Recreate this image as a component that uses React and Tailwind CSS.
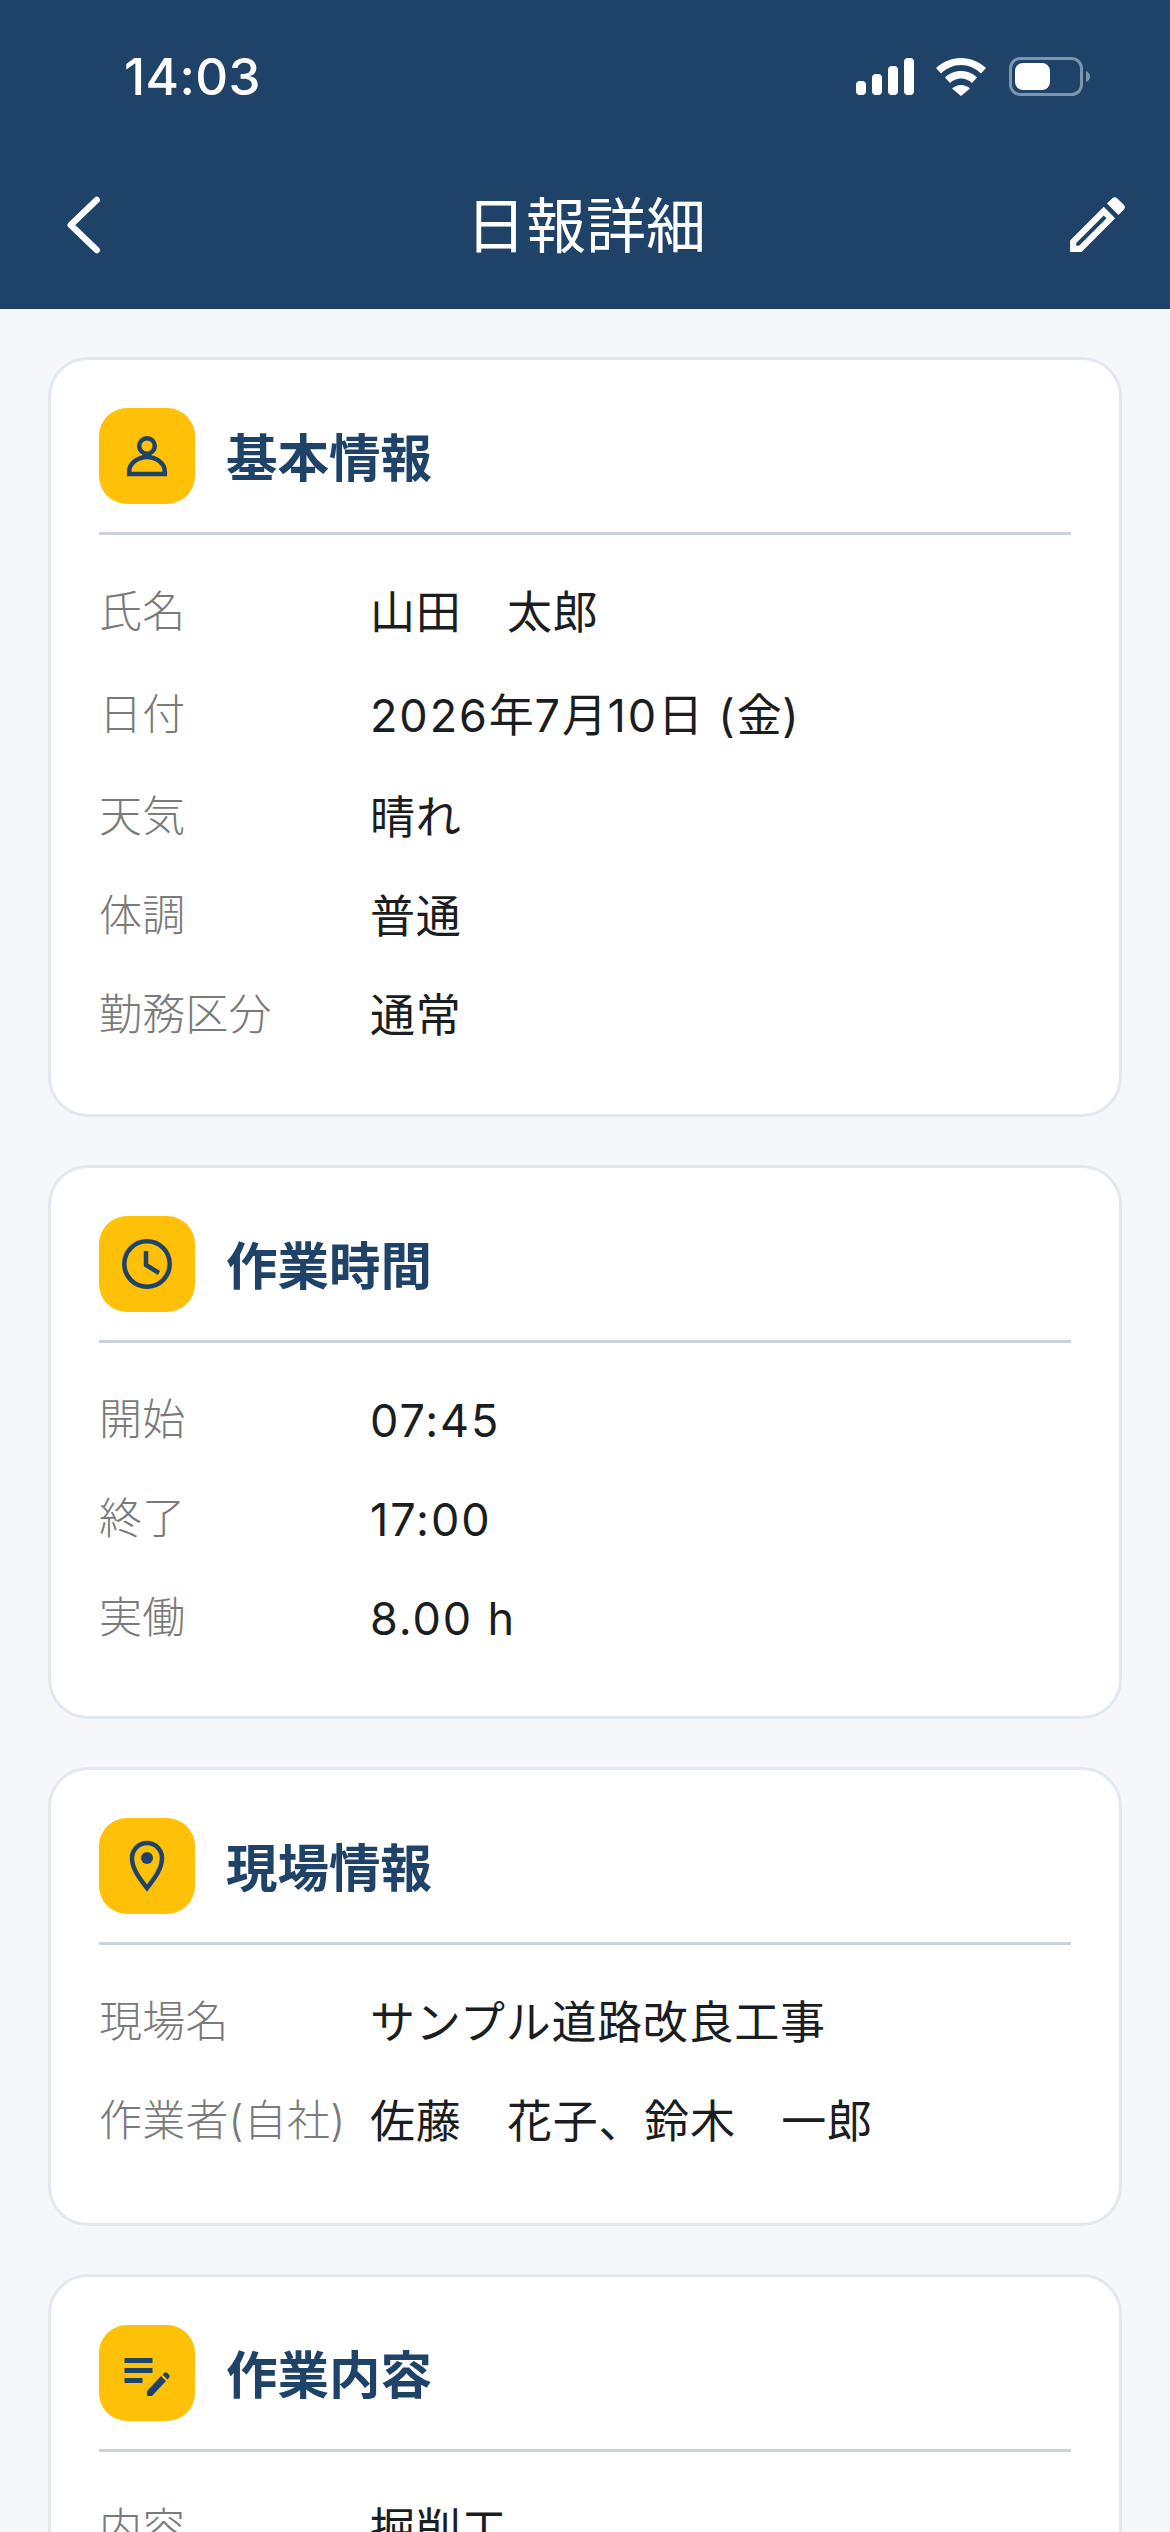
const font = { fontFamily: '"Inter", "Noto Sans CJK JP", sans-serif' };

const navy = "#1f4368";

function PersonIcon() {
  return (
    <svg width="96" height="96" viewBox="0 0 96 96" fill="none" stroke={navy} strokeWidth="4.5">
      <circle cx="48" cy="38" r="7.8" />
      <path d="M30.200 66v-2.500c0-8.500 9-14.500 17.800-14.500s17.800 6 17.800 14.500v2.500z" />
    </svg>
  );
}

function ClockIcon() {
  return (
    <svg width="96" height="96" viewBox="0 0 96 96" fill="none" stroke={navy} strokeWidth="4.5">
      <circle cx="48" cy="48" r="22.7" />
      <path d="M47 35v14l13 8" />
    </svg>
  );
}

function PinIcon() {
  return (
    <svg width="96" height="96" viewBox="0 0 96 96" fill="none">
      <path d="M48 70c-7-9-15-19-15-30a15 15 0 0 1 30 0c0 11-8 21-15 30z" stroke={navy} strokeWidth="4.5" />
      <circle cx="48" cy="40" r="6" fill={navy} />
    </svg>
  );
}

function EditNoteIcon() {
  return (
    <svg width="96" height="96" viewBox="0 0 96 96" fill={navy}>
      <rect x="25.5" y="33" width="28" height="5" />
      <rect x="25.5" y="43" width="28" height="5" />
      <rect x="25.5" y="53" width="18" height="5" />
      <path d="M48 66v5h5l14-15-5-5zM63.500 49.500l5 5 1.500-1.700c.9-1 .9-2.200 0-3.100l-1.700-1.800c-.9-.9-2.100-.9-3 0z" />
    </svg>
  );
}

// latin runs sit wider than the kana/kanji in the reference
function Value({ text }) {
  const parts = text.split(/([\x20-\x7e]+)/).filter(Boolean);
  return parts.map((part, i) =>
    /^[\x20-\x7e]/.test(part) ? (
      <span key={i} className="tracking-[1.9px]">{part}</span>
    ) : (
      <span key={i} className="tracking-[0.7px]">{part}</span>
    )
  );
}

function Card({ icon, title, rows }) {
  return (
    <section className="bg-white border-[3px] border-[#e2e8f0] rounded-[40px] px-[48px] pt-[48px] pb-[30px]">
      <div className="flex items-center gap-[31px] pb-[28px] border-b-[3px] border-[#cbd2dc]">
        <div className="w-[96px] h-[96px] rounded-[28px] bg-[#ffc107] shrink-0">{icon}</div>
        <h2 className="mt-[3px] text-[51.5px] leading-[66px] font-bold text-[#1f4368]">{title}</h2>
      </div>
      <div className="pt-[46px] flex flex-col">
        {rows.map(([label, value, height]) => (
          <div key={label} className={`flex items-start ${height || "h-[99px]"}`}>
            <div className="w-[271px] shrink-0 text-[43px] leading-[60px] tracking-[0.2px] text-[#7a7a7a] font-light whitespace-nowrap">{label}</div>
            <div className="mt-[2px] text-[45px] leading-[60px] text-[#1a1d21] whitespace-nowrap">
              <Value text={value} />
            </div>
          </div>
        ))}
      </div>
    </section>
  );
}

export default function App() {
  return (
    <div className="w-[1170px] h-[2532px] overflow-hidden bg-[#f5f7fb]" style={font}>
      <header className="bg-[#1f4368] h-[309px] text-white">
        <div className="h-[155px] pl-[124px] pr-[78px] pt-[46px] flex justify-between">
          <span className="text-[51px] leading-[62px] font-medium tracking-[0.4px]">14:03</span>
          <div className="flex items-center gap-[22px] h-[62px]">
            <svg width="58" height="38" viewBox="0 0 58 38" fill="#fff">
              <rect x="0" y="23" width="10" height="14" rx="4" />
              <rect x="16" y="16" width="10" height="21" rx="4" />
              <rect x="32" y="8" width="10" height="29" rx="4" />
              <rect x="48" y="0" width="10" height="37" rx="4" />
            </svg>
            <svg width="50" height="38" viewBox="0 0 50 38" fill="#fff">
              <path d="M25 0C15.500 0 7 3.700 0 10l5 5.500C11 10 17.500 7 25 7s14 3 20 8.500l5-5.500C43 3.700 34.500 0 25 0z" />
              <path d="M25 13c-6.500 0-12 2.500-16 6.500l5 5.500c3-3 6.800-4.500 11-4.500s8 1.500 11 4.500l5-5.500c-4-4-9.500-6.500-16-6.500z" />
              <path d="M25 27c-3.500 0-6.500 1.300-9 3.500l9 7.500 9-7.500c-2.500-2.200-5.500-3.500-9-3.500z" />
            </svg>
            <svg width="84" height="40" viewBox="0 0 84 40" fill="none">
              <rect x="2.500" y="1.500" width="71" height="36" rx="10" stroke="#7f95ad" strokeWidth="3" />
              <rect x="7" y="6" width="35" height="27" rx="8" fill="#fff" />
              <path d="M78 14c2.500 1 4 3 4 5.500s-1.500 4.500-4 5.500z" fill="#7f95ad" />
            </svg>
          </div>
        </div>
        <div className="grid grid-cols-[1fr_auto_1fr] items-center pl-[38px] pr-[36px] h-[142px]">
          <svg className="ml-[24px]" width="40" height="64" viewBox="0 0 40 64" fill="none" stroke="#fff" strokeWidth="6.5" strokeLinecap="round" strokeLinejoin="round">
            <path d="M34.700 6 8.700 31 34.700 56" />
          </svg>
          <h1 className="text-[60px] leading-[80px] font-normal">日報詳細</h1>
          <svg className="mb-[3px] justify-self-end" width="73" height="73" viewBox="0 0 24 24" fill="#fff">
            <path d="M14.060 9.020l.92.92L5.920 19H5v-.92l9.060-9.060M17.660 3c-.25 0-.51.1-.7.29l-1.830 1.830 3.750 3.750 1.830-1.830c.39-.39.39-1.020 0-1.410l-2.340-2.340c-.2-.2-.45-.29-.71-.29zm-3.600 3.190L3 17.250V21h3.750L17.810 9.940l-3.750-3.750z" />
          </svg>
        </div>
      </header>
      <main className="px-[48px] pt-[48px] flex flex-col gap-[48px]">
        <Card
          icon={<PersonIcon />}
          title="基本情報"
          rows={[
            ["氏名", "山田　太郎", "h-[103px]"],
            ["日付", "2026年7月10日 (金)", "h-[102px]"],
            ["天気", "晴れ"],
            ["体調", "普通"],
            ["勤務区分", "通常", "h-[100px]"],
          ]}
        />
        <Card
          icon={<ClockIcon />}
          title="作業時間"
          rows={[
            ["開始", "07:45"],
            ["終了", "17:00"],
            ["実働", "8.00 h"],
          ]}
        />
        <Card
          icon={<PinIcon />}
          title="現場情報"
          rows={[
            ["現場名", "サンプル道路改良工事"],
            ["作業者(自社)", "佐藤　花子、鈴木　一郎", "h-[103px]"],
          ]}
        />
        <Card icon={<EditNoteIcon />} title="作業内容" rows={[["内容", "掘削工"]]} />
      </main>
    </div>
  );
}
